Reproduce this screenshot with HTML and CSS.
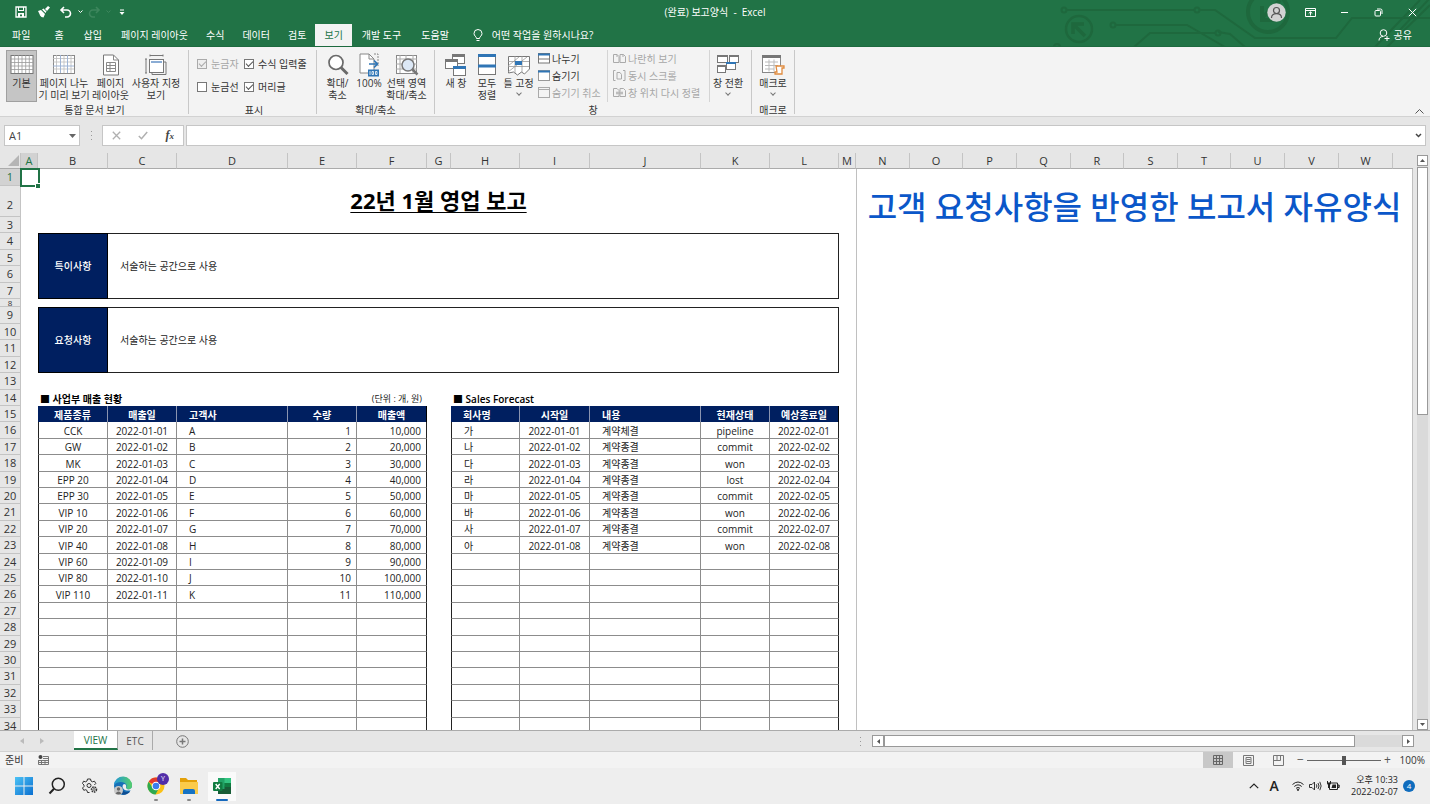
FILE: index.html
```html
<!DOCTYPE html>
<html lang="ko">
<head>
<meta charset="utf-8">
<title>(완료) 보고양식 - Excel</title>
<link rel="stylesheet" href="styles.css">
</head>
<body>
<div class="app">
<header class="top">
  <svg class="circuit" width="400" height="47" viewBox="0 0 400 47" fill="none" stroke="#1e683d" stroke-width="2">
    <circle cx="34" cy="10" r="2.500"/><path d="M37 10H164"/><circle cx="167" cy="10" r="2.500"/><path d="M170 10H185L225 38H306L322 18H400"/>
    <circle cx="83" cy="25" r="2.500"/><path d="M86 25H157L195 47M104 47L120 33H185M188 32L200 34L215 47"/><circle cx="188" cy="33" r="2.500"/>
    <circle cx="49" cy="29" r="13" stroke-width="2.500"/><path d="M55 36L43 24M43 34V24H54" stroke-width="3.500"/>
    <circle cx="238" cy="12" r="20" stroke-width="4"/><path d="M250 0L232 18M232 6V20H246" stroke-width="4"/>
    <path d="M345 47L390 0M357 47L400 5M370 30L400 -2"/><circle cx="27" cy="47" r="3"/>
  </svg>
  <div class="titlebar">
    <div class="quick">
      <button aria-label="저장"><svg width="12" height="12" viewBox="0 0 12 12"><path d="M1 1h10v10H1z" fill="none" stroke="#fff" stroke-width="1.300"/><path d="M3 1h1v3h4V1h1v4H3zM3 7h6v4H7V8.500H5V11H3z" fill="#fff"/></svg></button>
      <button aria-label="서식 복사"><svg width="13" height="12" viewBox="0 0 13 12"><path d="M1 5l3-1 4 4-1.500 3.500L4.500 11 3 9.500 2.500 8z" fill="#fff"/><path d="M5 3.500L6.500 2.500 9.500 5.500 8.500 7zM8 3l3-3 2 1.500L10 5z" fill="#fff"/></svg></button>
      <button aria-label="실행 취소"><svg width="13" height="12" viewBox="0 0 13 12" fill="none" stroke="#fff" stroke-width="1.600"><path d="M5 1L2 4l3 3M2 4h6a3.300 3.300 0 0 1 0 7H6"/></svg></button>
      <button class="slim" aria-label="실행 취소 목록"><svg width="5" height="4" viewBox="0 0 5 4" fill="none" stroke="#fff"><path d="M.5 .5l2 2 2-2"/></svg></button>
      <button class="redo" aria-label="다시 실행"><svg width="13" height="12" viewBox="0 0 13 12" fill="none" stroke="#3d865d" stroke-width="1.600"><path d="M8 1l3 3-3 3M11 4H5a3.300 3.300 0 0 0 0 7h2"/></svg></button>
      <button class="slim" aria-label="다시 실행 목록"><svg width="5" height="4" viewBox="0 0 5 4" fill="none" stroke="#3d865d"><path d="M.5 .5l2 2 2-2"/></svg></button>
      <button class="redo" aria-label="빠른 실행 도구 모음 사용자 지정"><svg width="6" height="7" viewBox="0 0 6 7"><path d="M1 1h4" stroke="#fff"/><path d="M0.500 3h5L3 6z" fill="#fff"/></svg></button>
    </div>
    <div class="doc">(완료) 보고양식&nbsp; -&nbsp; Excel</div>
    <div class="win">
      <button aria-label="계정"><svg width="19" height="19" viewBox="0 0 19 19"><circle cx="9.500" cy="9.500" r="9.200" fill="#d2d2d2"/><circle cx="9.500" cy="7.500" r="3" fill="none" stroke="#555" stroke-width="1.200"/><path d="M4.500 15c0-3 2-4.300 5-4.300s5 1.300 5 4.300" fill="none" stroke="#555" stroke-width="1.200"/></svg></button>
      <button aria-label="리본 메뉴 표시 옵션"><svg width="11" height="9" viewBox="0 0 11 9" fill="none" stroke="#fff"><path d="M.5 .5h10v8H.5zM.5 2.500h10M5.500 7.500V4M3.700 5.500l1.800-1.700 1.800 1.700"/></svg></button>
      <button aria-label="최소화"><svg width="9" height="9" viewBox="0 0 9 9" stroke="#fff"><path d="M1 4.500h7"/></svg></button>
      <button aria-label="이전 크기로 복원"><svg width="9" height="9" viewBox="0 0 9 9" fill="none" stroke="#fff"><rect x="1" y="2.500" width="5.500" height="5.500" rx="1"/><path d="M3 1h3.500q1.500 0 1.500 1.500V6"/></svg></button>
      <button aria-label="닫기"><svg width="9" height="9" viewBox="0 0 9 9" stroke="#fff"><path d="M.8 .8l7.400 7.400M8.200 .8L.8 8.200"/></svg></button>
    </div>
  </div>
  <nav class="tabs">
    <button class="file">파일</button><button>홈</button><button>삽입</button><button class="near">페이지 레이아웃</button><button class="near">수식</button><button class="near">데이터</button><button class="near">검토</button><button class="near on">보기</button><button>개발 도구</button><button>도움말</button>
    <button class="tell"><svg width="10" height="13" viewBox="0 0 10 13" fill="none" stroke="#fff"><path d="M3.500 9.500C3.500 7.500 1 7 1 4.500a4 4 0 0 1 8 0C9 7 6.500 7.500 6.500 9.500zM3.500 11.500h3"/></svg>어떤 작업을 원하시나요?</button>
    <button class="share"><svg width="12" height="12" viewBox="0 0 12 12" fill="none" stroke="#fff"><circle cx="5.500" cy="4" r="3.300"/><path d="M1 11.500c0-2.500 1.500-4 4-4M9 7v5M6.500 9.500h5"/></svg>공유</button>
  </nav>
</header>

<section class="ribbon">
  <div class="group g-views">
    <div class="tools">
      <button class="big on"><svg width="24" height="22" viewBox="0 0 24 22"><rect x="1" y="1.500" width="22" height="18" fill="#fff" stroke="#777"/><path d="M1 5h22M1 8.500h22M1 12h22M1 15.500h22M4.700 1v18M8.400 1v18M12 1v18M15.700 1v18M19.300 1v18" stroke="#999" stroke-width=".8"/></svg>기본</button>
      <button class="big w54"><svg width="24" height="22" viewBox="0 0 24 22"><rect x="1.500" y="1.500" width="21" height="18" fill="#fff" stroke="#888"/><path d="M1 4.500h21M1 8h21M1 15h21M4.500 1v18M12 1v18M19 1v18" stroke="#bbb" stroke-width=".8"/><path d="M1 12h21M8.500 1v18M15.500 1v18" stroke="#9fb4d4"/></svg>페이지 나누<br>기 미리 보기</button>
      <button class="big w39"><svg width="24" height="22" viewBox="0 0 24 22"><path d="M4.500 1h10l5 5v15h-15z" fill="#fff" stroke="#777"/><path d="M14.500 1v5h5M7.500 8.500h9v9h-9zM7.500 11.500h9M7.500 14.500h9M11 8.500v9" fill="none" stroke="#888"/></svg>페이지<br>레이아웃</button>
      <button class="big w52"><svg width="24" height="22" viewBox="0 0 24 22" fill="none" stroke="#777"><path d="M2 5v14M1 5h2M1 19h2M6 1.500h13M6 .5v2M19 .5v2"/><path d="M8 18v2.500h14V8h-2.500"/><rect x="5.500" y="5.500" width="14" height="13" fill="#fff"/><path d="M7 8h11" stroke="#8aacd4" stroke-width="2"/></svg>사용자 지정<br>보기</button>
    </div>
    <div class="caption">통합 문서 보기</div>
  </div>
  <div class="group g-show">
    <div class="tools checks">
      <label class="off"><input type="checkbox" checked disabled>눈금자</label><label><input type="checkbox" checked>수식 입력줄</label>
      <label><input type="checkbox">눈금선</label><label><input type="checkbox" checked>머리글</label>
    </div>
    <div class="caption">표시</div>
  </div>
  <div class="group g-zoom">
    <div class="tools">
      <button class="big w31"><svg width="24" height="22" viewBox="0 0 24 22"><circle cx="10" cy="8.500" r="7" fill="#fff" stroke="#6a6a6a" stroke-width="1.700"/><path d="M15 13.500l6.500 6.500" stroke="#6a6a6a" stroke-width="3"/></svg>확대/<br>축소</button>
      <button class="big w32"><svg width="24" height="24" viewBox="0 0 24 24"><path d="M3 1h9l5 5v14H3z" fill="#fff" stroke="#888"/><path d="M12 1v5h5" fill="none" stroke="#888"/><path d="M17 1h4v12" fill="none" stroke="#888" stroke-dasharray="2 1"/><path d="M12 11h8M17 7.500l3.500 3.500-3.500 3.500" fill="none" stroke="#2f75b5" stroke-width="1.700"/><rect x="11" y="16.500" width="11" height="7" fill="#2f75b5"/><path d="M13 18v4M15 18.500h1.500v3H15zM18.500 18.500H20v3h-1.500z" stroke="#fff" stroke-width=".8" fill="none"/></svg>100%</button>
      <button class="big w43"><svg width="24" height="22" viewBox="0 0 24 22"><rect x="1.500" y="1.500" width="20" height="18" fill="#fff" stroke="#888"/><path d="M1 5h21M1 10h21M1 15h21M5 1v18M18 1v18M11 1v4" stroke="#aaa"/><circle cx="13" cy="11" r="6" fill="#dce8f6" stroke="#777" stroke-width="1.500"/><path d="M17.500 15.500l5 5" stroke="#777" stroke-width="2.500"/></svg>선택 영역<br>확대/축소</button>
    </div>
    <div class="caption">확대/축소</div>
  </div>
  <div class="group g-window">
    <div class="tools">
      <button class="big w32"><svg width="24" height="24" viewBox="0 0 24 24"><g fill="#fff" stroke="#777"><rect x="8.500" y="1.500" width="12" height="9"/><rect x="1.500" y="6.500" width="12" height="9"/></g><path d="M8 2.500h13M1 7.500h13" stroke="#777" stroke-width="3"/><rect x="9.500" y="13.500" width="12" height="9" fill="#fff" stroke="#777"/><path d="M9 14.500h13" stroke="#2f75b5" stroke-width="3"/></svg>새 창</button>
      <button class="big w30"><svg width="24" height="24" viewBox="0 0 24 24"><rect x="3.500" y="1.500" width="17" height="20" fill="#fff" stroke="#777"/><path d="M3 2.500h18M3 13h18" stroke="#2f75b5" stroke-width="3"/></svg>모두<br>정렬</button>
      <button class="big w33"><svg width="24" height="22" viewBox="0 0 24 22"><path d="M1.500 2.500h21V15l-5 5-3-2-4 3-4-3-5 1z" fill="#fff" stroke="#777"/><path d="M1 7.500h21M1 12.500h21M8 2v17M15 2v17M1 18L20 3M1 12L12 3" stroke="#999" stroke-width=".8"/><path d="M8 7h7v4H8z" fill="#2f75b5"/></svg>틀 고정<i class="chev"></i></button>
      <div class="stack">
        <button><svg width="12" height="11" viewBox="0 0 12 11"><rect x=".5" y=".5" width="11" height="9.500" fill="#fff" stroke="#777"/><path d="M0 1.500h12" stroke="#2f75b5" stroke-width="2"/><path d="M0 6h12" stroke="#777"/></svg>나누기</button>
        <button><svg width="12" height="11" viewBox="0 0 12 11"><rect x=".5" y=".5" width="11" height="10" fill="#fff" stroke="#999"/><path d="M0 1.500h12" stroke="#2f75b5" stroke-width="2"/></svg>숨기기</button>
        <button disabled><svg width="12" height="11" viewBox="0 0 12 11"><rect x=".5" y=".5" width="11" height="10" fill="#f4f4f4" stroke="#aaa"/><path d="M0 2.500h12" stroke="#aaa"/></svg>숨기기 취소</button>
      </div>
      <div class="stack lined">
        <button disabled><svg width="13" height="11" viewBox="0 0 13 11" fill="none" stroke="#aaa"><path d="M.5 1.500H4l2 2V9.500H.5zM7 1.500h3.500l2 2V9.500H7zM4 1.500V4M10 1.500V4"/></svg>나란히 보기</button>
        <button disabled><svg width="13" height="11" viewBox="0 0 13 11" fill="none" stroke="#aaa"><path d="M2.500 .5h-2v10h2M4 2.500h3l1.500 2V9H4zM10 .5h2v10h-2"/></svg>동시 스크롤</button>
        <button disabled><svg width="13" height="11" viewBox="0 0 13 11" fill="none" stroke="#aaa"><path d="M.5 1.500H4l2 2V9.500H.5zM7 1.500h3.500l2 2V9.500H7zM3 6h7M4 4.500v3M9 4.500v3"/></svg>창 위치 다시 정렬</button>
      </div>
      <button class="big w36"><svg width="24" height="22" viewBox="0 0 24 22"><g fill="#fff" stroke="#777"><rect x="1.500" y="1.500" width="10" height="7"/><rect x="13.500" y="1.500" width="9" height="7"/><rect x="1.500" y="11.500" width="8" height="7"/></g><path d="M1 2h11M13 2h10M1 12h9" stroke="#777" stroke-width="2"/><rect x="10.500" y="8.500" width="9" height="7" fill="#fff" stroke="#777"/><path d="M10 9h10" stroke="#2f75b5" stroke-width="2"/></svg>창 전환<i class="chev"></i></button>
    </div>
    <div class="caption">창</div>
  </div>
  <div class="group g-macro">
    <div class="tools">
      <button class="big w42"><svg width="26" height="22" viewBox="0 0 26 22"><rect x="2.500" y="1.500" width="18" height="17" fill="#fff" stroke="#888"/><path d="M2 2.500h19" stroke="#777" stroke-width="3"/><path d="M5 8h13M5 11.500h13M5 15h9M9 5.500v12M14 5.500v12" stroke="#bbb"/><path d="M16 12h8v2h-2v6h-7v-2h2z" fill="#fff" stroke="#e08b3e" stroke-width="1.300"/></svg>매크로<i class="chev"></i></button>
    </div>
    <div class="caption">매크로</div>
  </div>
  <button class="collapse" aria-label="리본 메뉴 축소"><svg width="9" height="5" viewBox="0 0 9 5" fill="none" stroke="#555"><path d="M.5 4.500l4-4 4 4"/></svg></button>
</section>

<section class="formula">
  <div class="namebox"><input type="text" value="A1" aria-label="이름 상자"><button aria-label="이름 목록"><svg width="7" height="4" viewBox="0 0 7 4"><path d="M0 0h7L3.500 4z" fill="#666"/></svg></button></div>
  <span class="dots"></span>
  <div class="fx">
    <button aria-label="취소"><svg width="9" height="9" viewBox="0 0 9 9" stroke="#b0b0b0" stroke-width="1.300"><path d="M.8 .8l7.400 7.400M8.200 .8L.8 8.200"/></svg></button>
    <button aria-label="입력"><svg width="10" height="9" viewBox="0 0 10 9" fill="none" stroke="#b0b0b0" stroke-width="1.500"><path d="M.8 5L3.500 7.700 9.200 1"/></svg></button>
    <button class="fn" aria-label="함수 삽입">f<small>x</small></button>
  </div>
  <div class="entry"><input type="text" aria-label="수식 입력줄"><button aria-label="수식 입력줄 확장"><svg width="7" height="5" viewBox="0 0 7 5" fill="none" stroke="#444" stroke-width="1.500"><path d="M1 1l2.500 2.500L6 1"/></svg></button></div>
</section>

<main class="work">
<div class="sheet">
<table class="grid">
<colgroup><col class="c21"><col class="c17"><col class="c70"><col class="c69"><col class="c111"><col class="c69"><col class="c70"><col class="c24"><col class="c69"><col class="c70"><col class="c111"><col class="c69"><col class="c69"><col class="c17"><col class="c54"><col class="c53"><col class="c54"><col class="c54"><col class="c53"><col class="c54"><col class="c53"><col class="c54"><col class="c54"><col class="c54"><col></colgroup>
<thead><tr><th class="corner"><svg width="11" height="11" viewBox="0 0 11 11"><path d="M11 0v11H0z" fill="#b5b5b5"/></svg></th><th class="on">A</th><th>B</th><th>C</th><th>D</th><th>E</th><th>F</th><th>G</th><th>H</th><th>I</th><th>J</th><th>K</th><th>L</th><th>M</th><th>N</th><th>O</th><th>P</th><th>Q</th><th>R</th><th>S</th><th>T</th><th>U</th><th>V</th><th>W</th><th class="last"></th></tr></thead>
<tbody>
<tr class="tall"><th class="on">1</th><td class="sel"></td><td colspan="12"></td><td class="out" colspan="11"></td></tr>
<tr class="head"><th>2</th><td></td><td class="title" colspan="11">22년 1월 영업 보고</td><td></td><td class="out art" colspan="11" rowspan="2">고객 요청사항을 반영한 보고서 자유양식</td></tr>
<tr><th>3</th><td colspan="13"></td></tr>
<tr class="tall"><th>4</th><td></td><td class="tag" rowspan="4">특이사항</td><td class="note" colspan="10" rowspan="4">서술하는 공간으로 사용</td><td></td><td class="out" colspan="11"></td></tr>
<tr><th>5</th><td></td><td></td><td class="out" colspan="11"></td></tr>
<tr class="tall"><th>6</th><td></td><td></td><td class="out" colspan="11"></td></tr>
<tr><th>7</th><td></td><td></td><td class="out" colspan="11"></td></tr>
<tr class="thin"><th>8</th><td colspan="13"></td><td class="out" colspan="11"></td></tr>
<tr class="tall"><th>9</th><td></td><td class="tag" rowspan="4">요청사항</td><td class="note" colspan="10" rowspan="4">서술하는 공간으로 사용</td><td></td><td class="out" colspan="11"></td></tr>
<tr><th>10</th><td></td><td></td><td class="out" colspan="11"></td></tr>
<tr class="tall"><th>11</th><td></td><td></td><td class="out" colspan="11"></td></tr>
<tr><th>12</th><td></td><td></td><td class="out" colspan="11"></td></tr>
<tr class="tall"><th>13</th><td colspan="13"></td><td class="out" colspan="11"></td></tr>
<tr><th>14</th><td></td><td class="sub" colspan="3">■ 사업부 매출 현황</td><td class="unit" colspan="2">(단위 : 개, 원)</td><td></td><td class="sub" colspan="5">■ Sales Forecast</td><td></td><td class="out" colspan="11"></td></tr>
<tr class="cap"><th>15</th><td></td><td class="h first">제품종류</td><td class="h">매출일</td><td class="h l">고객사</td><td class="h">수량</td><td class="h end">매출액</td><td></td><td class="h first l">회사명</td><td class="h">시작일</td><td class="h l">내용</td><td class="h">현재상태</td><td class="h end">예상종료일</td><td></td><td class="out" colspan="11"></td></tr>
<tr class="r tall"><th>16</th><td><td>CCK<td>2022-01-01<td>A<td>1<td>10,000<td><td>가<td>2022-01-01<td>계약체결<td>pipeline<td>2022-02-01<td><td class="out" colspan="11"></tr>
<tr class="r"><th>17</th><td><td>GW<td>2022-01-02<td>B<td>2<td>20,000<td><td>나<td>2022-01-02<td>계약종결<td>commit<td>2022-02-02<td><td class="out" colspan="11"></tr>
<tr class="r tall"><th>18</th><td><td>MK<td>2022-01-03<td>C<td>3<td>30,000<td><td>다<td>2022-01-03<td>계약종결<td>won<td>2022-02-03<td><td class="out" colspan="11"></tr>
<tr class="r"><th>19</th><td><td>EPP 20<td>2022-01-04<td>D<td>4<td>40,000<td><td>라<td>2022-01-04<td>계약종결<td>lost<td>2022-02-04<td><td class="out" colspan="11"></tr>
<tr class="r"><th>20</th><td><td>EPP 30<td>2022-01-05<td>E<td>5<td>50,000<td><td>마<td>2022-01-05<td>계약종결<td>commit<td>2022-02-05<td><td class="out" colspan="11"></tr>
<tr class="r tall"><th>21</th><td><td>VIP 10<td>2022-01-06<td>F<td>6<td>60,000<td><td>바<td>2022-01-06<td>계약종결<td>won<td>2022-02-06<td><td class="out" colspan="11"></tr>
<tr class="r"><th>22</th><td><td>VIP 20<td>2022-01-07<td>G<td>7<td>70,000<td><td>사<td>2022-01-07<td>계약종결<td>commit<td>2022-02-07<td><td class="out" colspan="11"></tr>
<tr class="r tall"><th>23</th><td><td>VIP 40<td>2022-01-08<td>H<td>8<td>80,000<td><td>아<td>2022-01-08<td>계약종결<td>won<td>2022-02-08<td><td class="out" colspan="11"></tr>
<tr class="r"><th>24</th><td><td>VIP 60<td>2022-01-09<td>I<td>9<td>90,000<td><td><td><td><td><td><td><td class="out" colspan="11"></tr>
<tr class="r"><th>25</th><td><td>VIP 80<td>2022-01-10<td>J<td>10<td>100,000<td><td><td><td><td><td><td><td class="out" colspan="11"></tr>
<tr class="r tall"><th>26</th><td><td>VIP 110<td>2022-01-11<td>K<td>11<td>110,000<td><td><td><td><td><td><td><td class="out" colspan="11"></tr>
<tr class="r"><th>27</th><td><td><td><td><td><td><td><td><td><td><td><td><td><td class="out" colspan="11"></tr>
<tr class="r tall"><th>28</th><td><td><td><td><td><td><td><td><td><td><td><td><td><td class="out" colspan="11"></tr>
<tr class="r"><th>29</th><td><td><td><td><td><td><td><td><td><td><td><td><td><td class="out" colspan="11"></tr>
<tr class="r"><th>30</th><td><td><td><td><td><td><td><td><td><td><td><td><td><td class="out" colspan="11"></tr>
<tr class="r tall"><th>31</th><td><td><td><td><td><td><td><td><td><td><td><td><td><td class="out" colspan="11"></tr>
<tr class="r"><th>32</th><td><td><td><td><td><td><td><td><td><td><td><td><td><td class="out" colspan="11"></tr>
<tr class="r tall"><th>33</th><td><td><td><td><td><td><td><td><td><td><td><td><td><td class="out" colspan="11"></tr>
<tr class="r"><th>34</th><td><td><td><td><td><td><td><td><td><td><td><td><td><td class="out" colspan="11"></tr>
</tbody>
</table>
</div>
<div class="vscroll">
  <button aria-label="위로"><svg width="5" height="3" viewBox="0 0 5 3"><path d="M0 3h5L2.500 0z" fill="#555"/></svg></button>
  <div class="track"><div class="thumb"></div></div>
  <button aria-label="아래로"><svg width="5" height="3" viewBox="0 0 5 3"><path d="M0 0h5L2.500 3z" fill="#555"/></svg></button>
</div>
</main>

<div class="sheets">
  <div class="names">
    <button class="step" aria-label="이전 시트"><svg width="4" height="6" viewBox="0 0 4 6"><path d="M4 0v6L0 3z" fill="#bbb"/></svg></button>
    <button class="step" aria-label="다음 시트"><svg width="4" height="6" viewBox="0 0 4 6"><path d="M0 0v6l4-3z" fill="#bbb"/></svg></button>
    <button class="tab on">VIEW</button><button class="tab">ETC</button>
    <button class="add" aria-label="새 시트"><svg width="13" height="13" viewBox="0 0 13 13" fill="none" stroke="#777"><circle cx="6.500" cy="6.500" r="5.800"/><path d="M6.500 3.500v6M3.500 6.500h6" stroke-width="1.500"/></svg></button>
    <span class="dots"></span>
  </div>
  <div class="hscroll">
    <button aria-label="왼쪽으로"><svg width="3" height="5" viewBox="0 0 3 5"><path d="M3 0v5L0 2.500z" fill="#555"/></svg></button>
    <div class="track"><div class="thumb"></div></div>
    <button aria-label="오른쪽으로"><svg width="3" height="5" viewBox="0 0 3 5"><path d="M0 0v5l3-2.500z" fill="#555"/></svg></button>
  </div>
</div>

<div class="status">
  <span class="ready">준비</span>
  <svg width="11" height="10" viewBox="0 0 11 10"><circle cx="2.500" cy="2" r="2" fill="#444"/><path d="M5 1.500h5.500v8H.5V5M.5 5.500h10M5 3.500h5M3.500 5v4M7 5v4M1 7.500h9" fill="none" stroke="#777"/></svg>
  <div class="modes">
    <button class="on" aria-label="기본 보기"><svg width="11" height="11" viewBox="0 0 11 11" fill="none" stroke="#666"><path d="M.5 .5h9v9h-9zM.5 3.500h9M.5 6.500h9M3.500 .5v9M6.500 .5v9"/></svg></button>
    <button aria-label="페이지 레이아웃 보기"><svg width="11" height="11" viewBox="0 0 11 11" fill="none" stroke="#777"><path d="M.5 .5h10v10H.5zM3 2.500h5v6H3zM3.500 4.500h4M3.500 6.500h4"/></svg></button>
    <button aria-label="페이지 나누기 미리 보기"><svg width="11" height="11" viewBox="0 0 11 11" fill="none" stroke="#777"><path d="M.5 .5h10v10H.5zM.5 5.500h7v-5M4 .5v5"/></svg></button>
  </div>
  <div class="zoom"><button aria-label="축소">−</button><input type="range" min="10" max="190" value="100" aria-label="확대/축소"><button aria-label="확대">+</button><span class="pct">100%</span></div>
</div>

<footer class="taskbar">
  <div class="apps">
    <button aria-label="시작"><svg width="18" height="18" viewBox="0 0 18 18"><defs><linearGradient id="w" x1="0" y1="0" x2="1" y2="1"><stop offset="0" stop-color="#4cc2f5"/><stop offset="1" stop-color="#0a6fd0"/></linearGradient></defs><path d="M0 0h8.500v8.500H0zM9.500 0H18v8.500H9.500zM0 9.500h8.500V18H0zM9.500 9.500H18V18H9.500z" fill="url(#w)"/></svg></button>
    <button aria-label="검색"><svg width="18" height="18" viewBox="0 0 18 18" fill="none" stroke="#222" stroke-width="1.500"><circle cx="10.300" cy="7.300" r="6"/><path d="M6 11.700L1.500 16.500" stroke-width="2"/></svg></button>
    <button aria-label="설정"><svg width="16" height="16" viewBox="0 0 16 16" fill="none" stroke="#333"><path d="M5.500 1h3l.5 2 1.500.8 2-.6 1.300 2.300-1.500 1.500M5.500 1L5 3l-1.500.8-2-.6L.5 5.500 2 7v1.500L.5 10l1.300 2.300 2-.6 1.200.8.500 2h2"/><circle cx="7" cy="7.500" r="2"/><circle cx="12" cy="11.500" r="2.500" stroke-width="1.500" stroke-dasharray="1.600 .8"/><circle cx="12" cy="11.500" r="1" stroke-width=".7"/></svg></button>
    <button aria-label="Edge"><svg width="20" height="20" viewBox="0 0 20 20"><defs><linearGradient id="e" x1="0" y1="0" x2="1" y2="0"><stop offset="0" stop-color="#2296d8"/><stop offset="1" stop-color="#56cf6a"/></linearGradient></defs><circle cx="10" cy="10" r="9" fill="#1670b8"/><path d="M1 9a9 9 0 0 1 18 1c0 3-3 4-5 3-2-.8 0-2-.5-4C12 5 4 5 1 9z" fill="url(#e)"/><path d="M8 10c0 5 4 7 9 5.500-3 4-8 4-11 1z" fill="#0d4d92"/><path d="M11 8c3 0 2 3 2 4 1 2 4 2 6-.5v3h-5c-4 0-6-5-3-6.500z" fill="#eee"/><circle cx="5.500" cy="14.500" r="4.500" fill="#c8c8c8"/><circle cx="5.500" cy="13" r="1.700" fill="#666"/><path d="M2.500 17.500q3-4 6 0-3 2-6 0z" fill="#666"/></svg></button>
    <button class="run" aria-label="Chrome"><svg width="18" height="18" viewBox="0 0 18 18"><circle cx="9" cy="9" r="8.500" fill="#fbc116"/><path d="M9 9L1.600 4.700A8.500 8.500 0 0 1 16.400 4.700L9 5z" fill="#e33b2e"/><path d="M1.600 4.700A8.500 8.500 0 0 0 8.500 17.500L12 11 6 11z" fill="#2da94f"/><circle cx="9" cy="9" r="4.300" fill="#fff"/><circle cx="9" cy="9" r="3.300" fill="#3b7ded"/></svg><span class="who">Y</span></button>
    <button class="run" aria-label="파일 탐색기"><svg width="20" height="18" viewBox="0 0 20 18"><path d="M1 1h6l2 2h9v4H1z" fill="#e3a008"/><path d="M1 5h18v12H1z" fill="#fbcb4a"/><path d="M4 17v-3q0-2 2-2h8q2 0 2 2v3z" fill="#1673c4"/></svg></button>
    <button class="run on" aria-label="Excel"><svg width="19" height="18" viewBox="0 0 19 18"><path d="M5 1h13v16H5z" fill="#21a366"/><path d="M11.500 1H18v5h-6.500z" fill="#33c481"/><path d="M11.500 9.500H18V17H5V12h6.500z" fill="#185c37"/><path d="M11.500 6H18v4h-6.500z" fill="#107c41"/><rect y="5" width="9.500" height="9" rx="1" fill="#107c41"/><path d="M2.700 7l4 5M6.700 7l-4 5" stroke="#fff" stroke-width="1.400"/></svg></button>
  </div>
  <div class="tray">
    <button aria-label="숨겨진 아이콘 표시"><svg width="10" height="6" viewBox="0 0 10 6" fill="none" stroke="#222" stroke-width="1.200"><path d="M.8 5.200L5 1l4.200 4.200"/></svg></button>
    <button class="ime">A</button>
    <button class="net" aria-label="네트워크, 볼륨, 배터리">
      <svg width="12" height="10" viewBox="0 0 12 10" fill="none" stroke="#222"><path d="M.5 3.500q5.500-5 11 0M2.300 5.500q3.700-3.300 7.400 0M4 7.300q2-1.700 4 0"/><circle cx="6" cy="8.800" r=".7" fill="#222"/></svg>
      <svg width="13" height="10" viewBox="0 0 13 10" fill="none" stroke="#333"><path d="M.5 3.500H3L5.500 1v8L3 6.500H.5zM7.300 3.300q1.200 1.700 0 3.400M9 2q2 3 0 6M10.800 .8q2.700 4.200 0 8.400"/></svg>
      <svg width="13" height="10" viewBox="0 0 13 10"><path d="M2.500 2h8v6.500h-8zM11 4h1.200v2.500H11z" fill="none" stroke="#222"/><path d="M5.500 3.500H9V7H4.500zM0 0h1v1.500h2V0h1v2.500L3 4v3H1V4L0 2.500z" fill="#222"/></svg>
    </button>
    <button class="clock">오후 10:33<br>2022-02-07</button>
    <button class="bell">4</button>
  </div>
</footer>
</div>
</body>
</html>
```
FILE: styles.css
```css
* { box-sizing: border-box; }
body { margin: 0; background: #e6e6e6; }
body, button, input { font-family: "Open Sans", "Noto Sans CJK KR", sans-serif; font-size: 10px; line-height: 12px; color: #333; }
button, input { margin: 0; padding: 0; border: 0; background: none; border-radius: 0; outline: 0; }
button { display: flex; align-items: center; justify-content: center; white-space: nowrap; }
svg { display: block; flex: none; }
.app { display: flex; flex-direction: column; height: 100vh; overflow: hidden; }

/* title bar and ribbon tabs */
.top { position: relative; flex: none; background: #217346; border-bottom: 1px solid #1d6a3f; }
.top button, .doc { color: #fff; }
.circuit { position: absolute; right: 0; top: 0; }
.titlebar { position: relative; display: grid; grid-template-columns: 1fr auto 1fr; align-items: center; height: 24px; }
.quick { display: flex; padding-left: 10px; }
.quick button { width: 22px; height: 22px; }
.quick .slim { width: 8px; }
.quick .redo { width: 20px; }
.win { display: flex; justify-content: flex-end; padding-right: 1px; }
.win button { width: 34px; height: 22px; }
.tabs { position: relative; display: flex; height: 22px; }
.tabs button { padding: 0 10px; }
.tabs .file { padding: 0 14px 0 12px; }
.tabs .near { padding: 0 9px; }
.tabs .on { background: #f3f3f3; color: #217346; }
.tabs .tell { gap: 9px; padding-left: 14px; }
.tabs .share { gap: 4px; margin-left: auto; padding-right: 18px; }

/* ribbon */
.ribbon { display: flex; flex: none; height: 70px; padding-top: 3px; background: #f3f3f3; border-bottom: 1px solid #d2d2d2; }
.group { display: flex; flex-direction: column; height: 64px; padding: 0 5px; border-right: 1px solid #c8c8c8; }
.g-views { width: 189px; padding-left: 6px; }
.g-show { width: 128px; padding-left: 8px; }
.g-zoom { width: 118px; }
.g-window { width: 317px; }
.g-macro { width: 43px; padding: 0; }
.tools { display: flex; flex: none; height: 52px; }
.caption { text-align: center; line-height: 16px; }
.big { flex: none; flex-direction: column; justify-content: flex-start; width: 31px; height: 52px; padding-top: 3px; line-height: 12px; }
.big svg { height: 24px; }
.big.on { background: #c5c5c5; border: 1px solid #a0a0a0; padding-top: 2px; }
.w30 { width: 30px; } .w31 { width: 31px; } .w32 { width: 32px; } .w33 { width: 33px; } .w36 { width: 36px; }
.w39 { width: 39px; } .w42 { width: 42px; } .w43 { width: 43px; } .w52 { width: 52px; } .w54 { width: 54px; }
.chev { width: 4px; height: 4px; margin-top: 2px; border: solid #777; border-width: 0 1px 1px 0; transform: rotate(45deg); }
.checks { display: grid; grid-template-columns: 47px 1fr; grid-auto-rows: 23px; padding-top: 2px; }
.checks label { display: flex; align-items: center; gap: 4px; white-space: nowrap; }
.checks .off { color: #a6a6a6; }
.checks input { appearance: none; width: 10px; height: 10px; border: 1px solid #777; background: #fff; }
.checks .off input { border-color: #aaa; background: #eee; }
.checks input:checked::after { content: ""; display: block; width: 6px; height: 3px; margin: 1px; border: solid #555; border-width: 0 0 1px 1px; transform: rotate(-45deg); }
.checks .off input::after { border-color: #aaa; }
.stack { display: flex; flex: none; flex-direction: column; width: 72px; padding-left: 3px; }
.stack button { height: 17px; gap: 2px; justify-content: flex-start; }
.stack button:disabled { color: #a6a6a6; }
.lined { width: 103px; padding-left: 5px; border: solid #d4d4d4; border-width: 0 1px; }
.collapse { align-self: flex-end; margin: 0 6px 2px auto; }

/* formula bar */
.formula { display: flex; flex: none; height: 36px; padding: 8px 4px 7px; background: #e6e6e6; }
.namebox, .fx, .entry { display: flex; background: #fff; border: 1px solid #c6c6c6; }
.namebox { width: 76px; }
.namebox input { flex: 1; min-width: 0; padding-left: 4px; font-size: 11px; color: #444; }
.namebox button { width: 14px; }
.dots { width: 3px; height: 9px; background: repeating-linear-gradient(#999 0 1px, transparent 1px 4px) center / 1px 100% no-repeat; align-self: center; }
.formula .dots { margin: 0 9px 0 10px; }
.fx { width: 82px; }
.fx button { flex: 1; }
.fx .fn { font: italic 700 12px "Liberation Serif", serif; color: #444; }
.fn small { font-size: 9px; }
.entry { flex: 1; margin-left: 2px; }
.entry input { flex: 1; min-width: 0; }
.entry button { width: 14px; }

/* worksheet */
.work { display: flex; flex: 1; min-height: 0; border-bottom: 1px solid #ababab; }
.sheet { flex: 1; min-width: 0; overflow: hidden; background: #fff; }
.grid { width: 100%; table-layout: fixed; border-spacing: 0; line-height: 14px; color: #222; }
.c17 { width: 17px; } .c21 { width: 21px; } .c24 { width: 24px; } .c53 { width: 53px; } .c54 { width: 54px; }
.c69 { width: 69px; } .c70 { width: 70px; } .c111 { width: 111px; }
.grid td, .grid th { padding: 0; white-space: nowrap; }
.grid th { height: 16px; background: #e6e6e6; font-weight: 400; font-size: 11px; color: #333; border: solid #c4c4c4; border-width: 0 1px 1px 0; }
.grid thead th { border-bottom-color: #ababab; }
.grid .last { border-right: 0; }
.grid th.on { background: #d2d2d2; color: #217346; }
.corner svg { margin-left: 8px; }
.grid .tall th { height: 17px; }
.grid .head th { height: 31px; padding-top: 8px; }
.grid .thin th { height: 8px; font-size: 8px; line-height: 7px; }
.sel { position: relative; }
.sel::before { content: ""; position: absolute; inset: -1px -2px -1px -1px; border: 2px solid #217346; }
.sel::after { content: ""; position: absolute; right: -2px; bottom: -2px; width: 4px; height: 4px; background: #217346; outline: 1px solid #fff; }
.out { border: solid #c0c0c0; border-width: 0 1px; }
.grid .title { padding-bottom: 3px; text-align: center; font-size: 22px; line-height: 26px; font-weight: 700; color: #000; text-decoration: underline; text-decoration-thickness: 1px; text-underline-offset: 3px; }
.art { text-align: center; font-size: 32px; line-height: 42px; font-weight: 500; color: #0b57c9; vertical-align: top; }
.tag { text-align: center; background: #001f60; color: #fff; font-weight: 500; border: 1px solid #000; }
.grid .note { padding-left: 12px; border: solid #222; border-width: 1px 1px 1px 0; }
.grid .sub { padding: 1px 0 0 2px; font-weight: 600; color: #000; }
.grid .unit { padding: 1px 5px 0 0; text-align: right; font-size: 9px; }
.grid .h { padding-top: 1px; background: #001f60; color: #fff; font-weight: 700; text-align: center; border-right: 1px solid #8a94b0; }
.grid .h.end { border-right-color: #000; }
.grid .h.l { text-align: left; padding-left: 12px; }
.grid .r td { padding-top: 1px; }
.grid .r td:nth-child(n+3):nth-child(-n+7), .grid .r td:nth-child(n+9):nth-child(-n+13) { text-align: center; border: solid #8c8c8c; border-width: 0 1px 1px 0; }
.r td:nth-child(3), .r td:nth-child(9) { border-left: 1px solid #222 !important; }
.r td:nth-child(7), .r td:nth-child(13) { border-right-color: #222 !important; }
.grid .r td:nth-child(5), .grid .r td:nth-child(9), .grid .r td:nth-child(11) { text-align: left !important; padding-left: 12px; }
.grid .r td:nth-child(6), .grid .r td:nth-child(7) { text-align: right !important; padding-right: 5px; }

/* scroll bars */
.vscroll { display: flex; flex-direction: column; width: 17px; padding: 2px 2px 0 4px; }
.vscroll button { height: 11px; border: 1px solid #999; background: #fff; }
.vscroll .track { flex: 1; padding-top: 1px; background: #dadada; }
.thumb { background: #fff; border: 1px solid #999; }
.vscroll .thumb { height: 45%; }

/* sheet tabs */
.sheets { display: flex; flex: none; height: 21px; border-bottom: 1px solid #d2d2d2; }
.names { display: flex; flex: 1; padding-left: 12px; }
.step { width: 20px; }
.tab { width: 35px; height: 19px; border-right: 1px solid #aaa; color: #555; }
.tab.on { width: 44px; margin-left: 22px; background: #fff; color: #217346; border-bottom: 2px solid #217346; }
.add { margin-left: 23px; }
.names .dots { margin-left: auto; margin-right: 10px; }
.hscroll { display: flex; align-items: center; width: 39%; padding-right: 16px; }
.hscroll button { width: 12px; height: 12px; border: 1px solid #999; background: #fff; }
.hscroll .track { flex: 1; background: #dadada; }
.hscroll .thumb { width: 91%; height: 12px; }

/* status bar */
.status { display: flex; flex: none; align-items: center; height: 16px; background: #f3f3f3; }
.ready { width: 33px; margin-right: 5px; padding-left: 5px; line-height: 16px; }
.modes { display: flex; margin-left: auto; }
.modes button { width: 30px; height: 16px; }
.modes .on { background: #c8c8c8; }
.zoom { display: flex; align-items: center; padding-left: 3px; }
.zoom button { width: 9px; font-size: 12px; color: #555; }
.zoom input { appearance: none; width: 74px; height: 10px; margin: 0 2px; background: linear-gradient(#666, #666) center / 100% 1px no-repeat; }
.zoom input::-webkit-slider-thumb { appearance: none; width: 4px; height: 9px; background: #555; }
.pct { width: 38px; padding-right: 5px; text-align: right; }

/* taskbar */
.taskbar { display: flex; flex: none; justify-content: space-between; height: 36px; background: #eee; }
.apps { display: flex; align-items: center; gap: 5px; padding-left: 10px; }
.apps button { position: relative; width: 28px; height: 29px; }
.apps .on { background: #fafafa; }
.run::after { content: ""; position: absolute; left: 12px; bottom: 0; width: 4px; height: 2px; border-radius: 1px; background: #888; }
.run.on::after { left: 8px; width: 12px; background: #1568bd; }
.who { position: absolute; right: 1px; top: 1px; width: 12px; height: 12px; border-radius: 6px; background: #512da8; color: #fff; font-size: 7px; line-height: 12px; }
.tray { display: flex; align-items: center; padding-right: 15px; }
.tray button { color: #222; }
.ime { width: 30px; font-size: 14px; font-weight: 600; }
.net { gap: 5px; margin-left: 3px; }
.tray .clock { display: block; margin: 0 5px 0 11px; font-size: 9px; line-height: 12px; text-align: right; }
.tray .bell { width: 12px; height: 12px; border-radius: 6px; background: #0f6cbd; color: #fff; font-size: 8px; }
```
